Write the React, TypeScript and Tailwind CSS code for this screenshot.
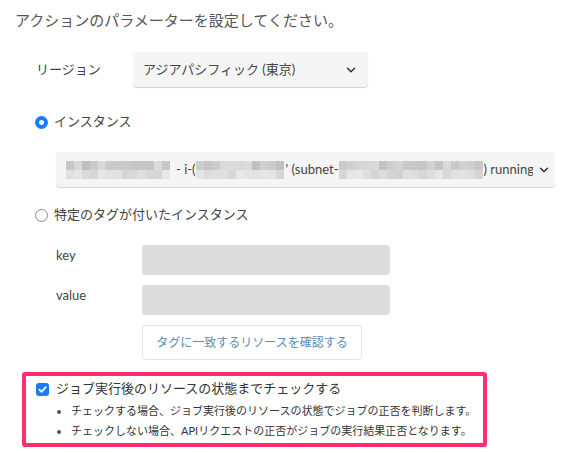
import { ChevronDown } from 'lucide-react';

const font = { fontFamily: 'Lato, "Noto Sans CJK JP", sans-serif' };

// pixelated stand-in for the redacted ids
function Mosaic({ cols, seed }: { cols: number; seed: number }) {
  const cells = [];
  for (let r = 0; r < 2; r++) {
    for (let c = 0; c < cols; c++) {
      const n = Math.abs(Math.sin((c + 1) * 12.9898 + (r + 1) * 78.233 + seed) * 43758.5453) % 1;
      const v = r === 0 ? Math.round(190 + n * 30) : Math.round(210 + n * 22);
      cells.push(<div key={`${r}-${c}`} style={{ background: `rgb(${v},${v},${v})` }} />);
    }
  }
  return (
    <div className="grid h-[18px] shrink-0" style={{ gridTemplateColumns: `repeat(${cols}, 8px)` }}>
      {cells}
    </div>
  );
}

function Radio({ checked }: { checked: boolean }) {
  return checked ? (
    <span className="flex h-[13px] w-[13px] items-center justify-center rounded-full bg-[#1a7cf5]">
      <span className="h-[5px] w-[5px] rounded-full bg-white" />
    </span>
  ) : (
    <span className="h-[13px] w-[13px] rounded-full border border-[#8a8a8a] bg-white" />
  );
}

export default function App() {
  return (
    <div className="h-[453px] w-[563px] overflow-hidden bg-white text-[#444]" style={font}>
      <p className="mt-[10px] pl-[15px] text-[15px] leading-[20px] text-[#555]">
        アクションのパラメーターを設定してください。
      </p>

      <div className="mt-[22px] flex items-center pl-[36px]">
        <span className="w-[97px] text-[13px]">リージョン</span>
        <div className="flex h-[35px] w-[235px] items-center justify-between rounded-[4px] bg-[#f5f5f5] pl-[10px] pr-[10px] text-[13px] text-[#444] shadow-[0_1px_1px_rgba(0,0,0,0.18)]">
          <span>アジアパシフィック (東京)</span>
          <ChevronDown size={14} strokeWidth={2.5} className="text-[#333]" />
        </div>
      </div>

      <div className="mt-[25px] flex h-[20px] items-center gap-[6px] pl-[35px] text-[13px]">
        <Radio checked />
        <span>インスタンス</span>
      </div>

      <div className="ml-[56px] mt-[20px] flex h-[35px] w-[499px] items-center overflow-hidden rounded-[4px] bg-[#f5f5f5] pl-[10px] pr-[4px] text-[13px] shadow-[0_1px_1px_rgba(0,0,0,0.18)]">
        <div className="flex min-w-0 flex-1 items-center overflow-hidden whitespace-nowrap">
          <Mosaic cols={13} seed={1} />
          <span className="ml-[6px]">- i-(</span>
          <Mosaic cols={11} seed={4} />
          <span className="ml-[2px]">' (subnet-</span>
          <Mosaic cols={18} seed={9} />
          <span className="ml-[1px]">) running</span>
        </div>
        <ChevronDown size={14} strokeWidth={2.5} className="ml-[4px] shrink-0 text-[#333]" />
      </div>

      <div className="mt-[18px] flex h-[20px] items-center gap-[6px] pl-[35px] text-[13px]">
        <Radio checked={false} />
        <span>特定のタグが付いたインスタンス</span>
      </div>

      <div className="mt-[20px] flex items-start pl-[56px]">
        <span className="w-[86px] pt-[1px] text-[13px]">key</span>
        <div className="h-[30px] w-[248px] rounded-[4px] bg-[#dcdcdc]" />
      </div>
      <div className="mt-[10px] flex items-start pl-[56px]">
        <span className="w-[86px] pt-[1px] text-[13px]">value</span>
        <div className="h-[30px] w-[248px] rounded-[4px] bg-[#dcdcdc]" />
      </div>

      <button className="ml-[142px] mt-[10px] flex h-[35px] w-[220px] items-center justify-center rounded-[4px] border border-[#e3e3e3] bg-white text-[12px] text-[#5b8db8]">
        タグに一致するリソースを確認する
      </button>

      <div className="ml-[22px] mt-[12px] h-[75px] w-[465px] rounded-[3px] border-[4px] border-[#ff2f6c] bg-white pl-[10px] pt-[5px]">
        <label className="flex h-[16px] items-center gap-[7px] text-[13px] text-[#333]">
          <span className="flex h-[13px] w-[13px] items-center justify-center rounded-[3px] bg-[#1a7cf5]">
            <svg width="9" height="9" viewBox="0 0 10 10" fill="none">
              <path d="M1.5 5.2 L4 7.6 L8.6 2.4" stroke="white" strokeWidth="1.9" strokeLinecap="round" strokeLinejoin="round" />
            </svg>
          </span>
          <span>ジョブ実行後のリソースの状態までチェックする</span>
        </label>
        <ul className="mt-[4px] list-disc pl-[35px] text-[11px] leading-[20px] text-[#333] marker:text-[#555]">
          <li>チェックする場合、ジョブ実行後のリソースの状態でジョブの正否を判断します。</li>
          <li>チェックしない場合、APIリクエストの正否がジョブの実行結果正否となります。</li>
        </ul>
      </div>
    </div>
  );
}
